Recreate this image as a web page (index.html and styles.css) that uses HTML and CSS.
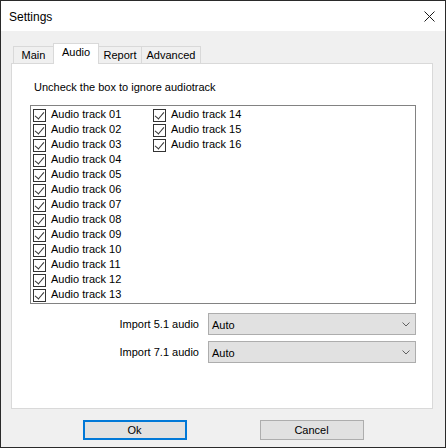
FILE: index.html
```html
<!DOCTYPE html>
<html>
<head>
<meta charset="utf-8">
<link rel="stylesheet" href="styles.css">
</head>
<body>
<div class="window">
  <div class="titlebar">
    <span class="title">Settings</span>
    <svg class="close" width="11" height="11" viewBox="0 0 11 11"><path d="M0.5 0.5 L10.5 10.5 M10.5 0.5 L0.5 10.5" stroke="#1a1a1a" stroke-width="1" fill="none"/></svg>
  </div>
  <div class="client">
    <div class="tabs">
      <div class="tab t-main">Main</div>
      <div class="tab t-audio active">Audio</div>
      <div class="tab t-report">Report</div>
      <div class="tab t-adv">Advanced</div>
    </div>
    <div class="panel">
      <div class="hint">Uncheck the box to ignore audiotrack</div>
      <div class="listbox">
        <div class="item"><span class="cb"></span><span class="txt">Audio track 01</span></div>
        <div class="item"><span class="cb"></span><span class="txt">Audio track 02</span></div>
        <div class="item"><span class="cb"></span><span class="txt">Audio track 03</span></div>
        <div class="item"><span class="cb"></span><span class="txt">Audio track 04</span></div>
        <div class="item"><span class="cb"></span><span class="txt">Audio track 05</span></div>
        <div class="item"><span class="cb"></span><span class="txt">Audio track 06</span></div>
        <div class="item"><span class="cb"></span><span class="txt">Audio track 07</span></div>
        <div class="item"><span class="cb"></span><span class="txt">Audio track 08</span></div>
        <div class="item"><span class="cb"></span><span class="txt">Audio track 09</span></div>
        <div class="item"><span class="cb"></span><span class="txt">Audio track 10</span></div>
        <div class="item"><span class="cb"></span><span class="txt">Audio track 11</span></div>
        <div class="item"><span class="cb"></span><span class="txt">Audio track 12</span></div>
        <div class="item"><span class="cb"></span><span class="txt">Audio track 13</span></div>
        <div class="item"><span class="cb"></span><span class="txt">Audio track 14</span></div>
        <div class="item"><span class="cb"></span><span class="txt">Audio track 15</span></div>
        <div class="item"><span class="cb"></span><span class="txt">Audio track 16</span></div>
      </div>
      <div class="form">
        <label class="lbl">Import 5.1 audio</label>
        <div class="combo"><span>Auto</span><svg width="8" height="5" viewBox="0 0 8 5"><path d="M0.5 0.5 L4 4 L7.5 0.5" stroke="#606060" stroke-width="1" fill="none"/></svg></div>
        <label class="lbl">Import 7.1 audio</label>
        <div class="combo"><span>Auto</span><svg width="8" height="5" viewBox="0 0 8 5"><path d="M0.5 0.5 L4 4 L7.5 0.5" stroke="#606060" stroke-width="1" fill="none"/></svg></div>
      </div>
    </div>
    <div class="buttons">
      <div class="btn default">Ok</div>
      <div class="btn">Cancel</div>
    </div>
  </div>
</div>
</body>
</html>
```

FILE: styles.css
```css
* { box-sizing: border-box; }
html, body { margin: 0; padding: 0; background: #ffffff; }
body {
  width: 446px;
  height: 448px;
  font-family: "Liberation Sans", Arial, sans-serif;
  font-size: 11px;
  color: #000;
}
.window {
  width: 446px;
  height: 448px;
  border: 1px solid #2a2a2a;
  display: flex;
  flex-direction: column;
  background: #f0f0f0;
}
.titlebar {
  height: 30px;
  background: #ffffff;
  display: flex;
  align-items: center;
  justify-content: space-between;
  padding: 1px 10px 0 8px;
}
.title {
  font-size: 12px;
  color: #000;
}
.close { display: block; margin-top: -1px; }
.client {
  flex: 1;
  display: flex;
  flex-direction: column;
  padding: 12px 12px 0 10px;
}
.tabs {
  height: 20px;
  display: flex;
  align-items: flex-end;
  padding-left: 2px;
}
.tab {
  height: 17px;
  border: 1px solid #d9d9d9;
  border-bottom: none;
  margin-right: -1px;
  background: #f0f0f0;
  display: flex;
  align-items: center;
  justify-content: center;
  padding-top: 0;
}
.tab.active {
  height: 21px;
  margin-bottom: -1px;
  background: #ffffff;
  position: relative;
  z-index: 1;
  align-items: flex-start;
  padding-top: 2px;
}
.t-main { width: 41px; }
.t-audio { width: 46px; }
.t-report { width: 44px; }
.t-adv { width: 60px; }
.panel {
  height: 346px;
  border: 1px solid #d9d9d9;
  background: #ffffff;
  padding: 17px 0 0 18px;
}
.hint {
  line-height: 13px;
  height: 13px;
  padding-left: 4px;
}
.listbox {
  margin-top: 11px;
  width: 386px;
  height: 199px;
  border: 1px solid #828282;
  background: #fff;
  padding: 2px 0 0 2px;
  display: grid;
  grid-auto-flow: column;
  grid-template-rows: repeat(13, 15px);
  grid-template-columns: 120px 120px;
  justify-content: start;
}
.item {
  display: flex;
  align-items: flex-start;
  height: 15px;
  white-space: nowrap;
}
.txt {
  line-height: 11px;
  margin-top: 1px;
}
.cb {
  width: 13px;
  height: 13px;
  margin-top: 1px;
  border: 1px solid #333333;
  background: #fff;
  margin-right: 5px;
  position: relative;
  flex: none;
}
.cb::after {
  content: "";
  position: absolute;
  left: 3px;
  top: 0px;
  width: 4px;
  height: 8px;
  border-right: 1px solid #333;
  border-bottom: 1px solid #333;
  transform: rotate(40deg);
}
.form {
  margin-top: 9px;
  width: 386px;
  display: grid;
  grid-template-columns: auto 208px;
  justify-content: end;
  column-gap: 9px;
  row-gap: 6px;
  align-items: center;
}
.lbl { text-align: right; }
.combo {
  height: 22px;
  border: 1px solid #adadad;
  background: #e1e1e1;
  display: flex;
  align-items: center;
  justify-content: space-between;
  padding: 1px 5px 0 3px;
}
.combo svg { display: block; }
.buttons {
  margin-top: 11px;
  display: flex;
  justify-content: center;
  gap: 73px;
  padding-left: 2px;
}
.btn {
  width: 104px;
  height: 20px;
  border: 1px solid #adadad;
  background: #e1e1e1;
  display: flex;
  align-items: center;
  justify-content: center;
}
.btn.default {
  border: 2px solid #0078d7;
}
```
